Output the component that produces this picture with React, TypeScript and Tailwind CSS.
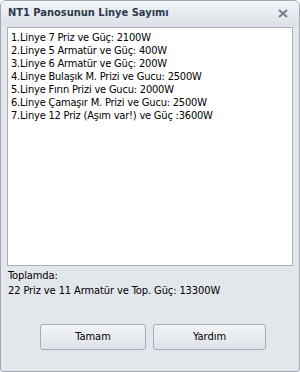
import React from 'react'

const lines = [
  '1.Linye 7 Priz ve Güç: 2100W',
  '2.Linye 5 Armatür ve Güç: 400W',
  '3.Linye 6 Armatür ve Güç: 200W',
  '4.Linye Bulaşık M. Prizi ve Gucu: 2500W',
  '5.Linye Fırın Prizi ve Gucu: 2000W',
  '6.Linye Çamaşır M. Prizi ve Gucu: 2500W',
  '7.Linye 12 Priz (Aşım var!) ve Güç :3600W',
]

export default function App() {
  return (
    <div className="w-[300px] h-[372px] bg-white" style={{ fontFamily: '"DejaVu Sans Condensed", "DejaVu Sans", sans-serif' }}>
      <div className="flex flex-col w-full h-full rounded-t-[6px] rounded-b-[3px] border border-[#9ea7b3] bg-[#e3e6eb] overflow-hidden">
        {/* title bar */}
        <div className="flex items-center justify-between h-[25px] px-[6px] bg-gradient-to-b from-[#f3f5f8] to-[#dde1e7]">
          <span className="text-[11px] font-bold text-[#2c3a4c] pl-[1px]">NT1 Panosunun Linye Sayımı</span>
          <svg width="10" height="9" viewBox="0 0 10 9" className="mr-[5px]">
            <path d="M1 1 L9 8 M9 1 L1 8" stroke="#737c88" strokeWidth="2" />
          </svg>
        </div>

        <div className="flex flex-col flex-1 px-[6px] pt-[1px]">
          <div className="h-[239px] bg-white border border-[#a9b0ba] px-[3px] pt-[3px]">
            {lines.map((l) => (
              <div key={l} className="text-[11px] leading-[13px] tracking-[-0.2px] text-black">{l}</div>
            ))}
          </div>

          <div className="mt-[2px] text-[11px] leading-[15px] tracking-[-0.1px] text-black pl-[1px]">
            <div>Toplamda:</div>
            <div>22 Priz ve 11 Armatür ve Top. Güç: 13300W</div>
          </div>

          <div className="flex gap-[7px] mt-[26px] pl-[33px]">
            <button className="w-[106px] h-[26px] rounded-[3px] border border-[#a4acb7] bg-gradient-to-b from-[#f1f3f6] to-[#dfe3e8] text-[11px] text-black">Tamam</button>
            <button className="w-[113px] h-[26px] rounded-[3px] border border-[#a4acb7] bg-gradient-to-b from-[#f1f3f6] to-[#dfe3e8] text-[11px] text-black">Yardım</button>
          </div>
        </div>
      </div>
    </div>
  )
}
